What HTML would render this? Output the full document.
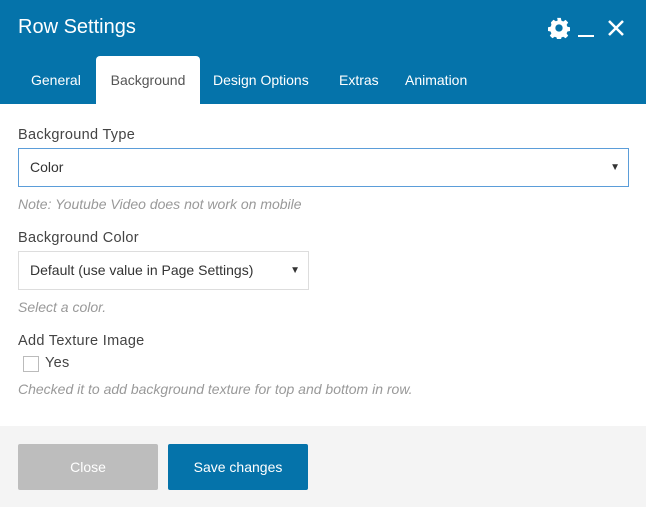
<!DOCTYPE html>
<html><head><style>
*{margin:0;padding:0;box-sizing:border-box}
body{width:646px;height:507px;font-family:"Liberation Sans",sans-serif;background:#fff;position:relative;overflow:hidden;color:#444}
.hdr{position:absolute;left:0;top:0;width:646px;height:104px;background:#0573aa}
.title{position:absolute;left:18px;top:16px;color:#fff;font-size:20px}
.tab{position:absolute;top:72px;color:#fff;font-size:14px}
.act{position:absolute;left:96px;top:56px;width:104px;height:48px;background:#fff;border-radius:4px 4px 0 0;color:#555;font-size:14px;text-align:center;line-height:48px}
.lbl{position:absolute;left:18px;font-size:14.5px;color:#444;letter-spacing:.3px}
.note{position:absolute;left:18px;font-size:14px;font-style:italic;color:#999}
.sel{position:absolute;left:18px;height:39px;border:1px solid #ddd;font-size:14px;color:#333;padding-left:11px;line-height:37px}
.sel span{position:absolute;right:8px;font-size:10px}
.foot{position:absolute;left:0;top:426px;width:646px;height:81px;background:#f4f4f4}
.btn{position:absolute;top:444px;height:46px;width:140px;color:#fff;font-size:14px;text-align:center;line-height:46px;border-radius:2px}
</style></head><body>
<div class="hdr">
<div class="title">Row Settings</div>
<svg style="position:absolute;left:548px;top:17px" width="22" height="22" viewBox="0 0 24 24"><path fill="#fff" d="M10 1h4l.6 3 2 .9 2.6-1.7 2.8 2.8-1.7 2.6.9 2 3 .6v4l-3 .6-.9 2 1.7 2.6-2.8 2.8-2.6-1.7-2 .9-.6 3h-4l-.6-3-2-.9-2.6 1.7-2.8-2.8 1.7-2.6-.9-2-3-.6v-4l3-.6.9-2L3.2 5.8 6 3l2.6 1.7 2-.9zM12 8a4 4 0 100 8 4 4 0 000-8z"/></svg>
<div style="position:absolute;left:578px;top:35px;width:16px;height:2px;background:#fff"></div>
<svg style="position:absolute;left:607px;top:19px" width="18" height="18" viewBox="0 0 18 18"><path d="M2 2L16 16M16 2L2 16" stroke="#fff" stroke-width="2.5"/></svg>
<div class="tab" style="left:31px">General</div>
<div class="act">Background</div>
<div class="tab" style="left:213px">Design Options</div>
<div class="tab" style="left:339px">Extras</div>
<div class="tab" style="left:405px">Animation</div>
</div>
<div class="lbl" style="top:127px">Background Type</div>
<div class="sel" style="top:148px;width:611px;border-color:#5b9dd9;color:#333">Color<span>▼</span></div>
<div class="note" style="top:196px">Note: Youtube Video does not work on mobile</div>
<div class="lbl" style="top:230px">Background Color</div>
<div class="sel" style="top:251px;width:291px">Default (use value in Page Settings)<span>▼</span></div>
<div class="note" style="top:299px">Select a color.</div>
<div class="lbl" style="top:333px">Add Texture Image</div>
<div style="position:absolute;left:23px;top:356px;width:16px;height:16px;border:1px solid #bbb"></div>
<div class="lbl" style="left:45px;top:355px">Yes</div>
<div class="note" style="top:381px">Checked it to add background texture for top and bottom in row.</div>
<div class="foot"></div>
<div class="btn" style="left:18px;background:#bdbdbd">Close</div>
<div class="btn" style="left:168px;background:#0573aa">Save changes</div>
</body></html>
